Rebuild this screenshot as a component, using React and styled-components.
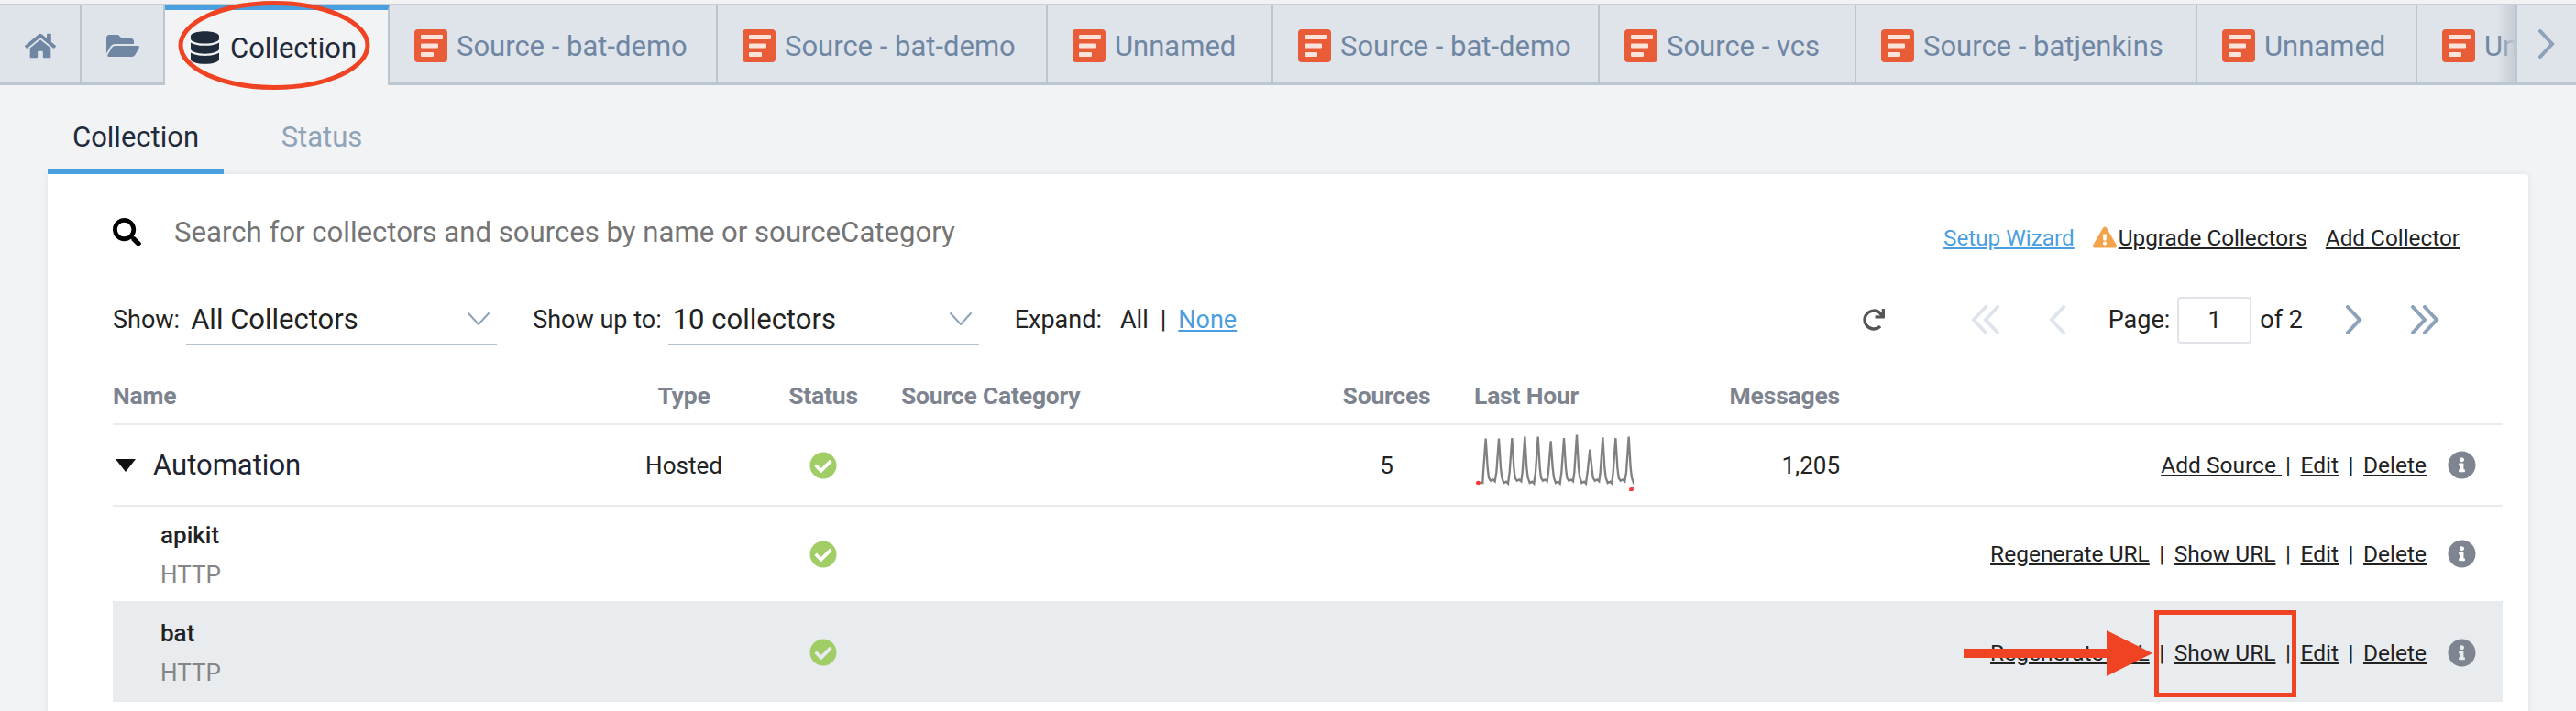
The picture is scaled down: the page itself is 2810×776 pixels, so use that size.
import React from 'react';
import styled, { createGlobalStyle } from 'styled-components';
import {
  FaHome,
  FaFolderOpen,
  FaDatabase,
  FaSearch,
  FaRedo,
  FaCheckCircle,
  FaInfoCircle,
  FaExclamationTriangle,
} from 'react-icons/fa';

const sourceTabs = [
  { label: 'Source - bat-demo', width: 358 },
  { label: 'Source - bat-demo', width: 360 },
  { label: 'Unnamed', width: 246 },
  { label: 'Source - bat-demo', width: 356 },
  { label: 'Source - vcs', width: 280 },
  { label: 'Source - batjenkins', width: 372 },
  { label: 'Unnamed', width: 240 },
  { label: 'Unnamed', width: 240 },
];

const peaks = [
  [362, 120], [405, 120], [448, 118], [490, 114], [533, 114], [575, 128],
  [618, 118], [660, 108], [703, 156], [745, 116], [787, 118], [830, 114],
];

// sparkline points, same shape repeated for every peak
const sparkPoints = () => {
  const pts = [[337, 265], [352, 265]];
  peaks.forEach(([x, y], i) => {
    const low = 258 + ((i * 7) % 14);
    pts.push([x - 8, 230], [x, y], [x + 6, 215], [x + 10, 248], [x + 16, low], [x + 24, low - 4], [x + 30, low + 2]);
  });
  pts.push([838, 287]);
  return pts.map((p) => p.join(',')).join(' ');
};

const GlobalStyle = createGlobalStyle`
  html, body {
    margin: 0;
    padding: 0;
    background: #f2f3f5;
    font-family: Roboto, "Liberation Sans", sans-serif;
  }
`;

const Page = styled.div`
  position: relative;
  width: 2810px;
  height: 776px;
  overflow: hidden;
  background: #f2f3f5;
  color: #222;
`;

const TopStrip = styled.div`
  height: 5px;
  background: #f2f2f2;
  border-bottom: 1px solid #c9cfd6;
  box-sizing: border-box;
`;

const TabBar = styled.div`
  display: flex;
  height: 88px;
  box-sizing: border-box;
`;

const TabScroller = styled.div`
  position: relative;
  display: flex;
  flex: 0 0 2744px;
  overflow: hidden;

  &::after {
    content: '';
    position: absolute;
    top: 0;
    right: 0;
    bottom: 3px;
    width: 20px;
    background: linear-gradient(to right, rgba(190, 198, 208, 0), #c5ccd5);
  }
`;

const Tab = styled.div`
  flex: none;
  box-sizing: border-box;
  width: ${(p) => p.$width}px;
  height: 88px;
  display: flex;
  align-items: center;
  gap: ${(p) => p.$gap || 10}px;
  padding: ${(p) => (p.$active ? 0 : 4)}px 0 0 ${(p) => p.$left ?? 27}px;
  font-size: 31px;
  color: ${(p) => (p.$active ? '#1f2a3a' : '#6f87a3')};
  background: ${(p) => (p.$active ? '#f2f3f5' : '#dfe3ea')};
  border-top: ${(p) => (p.$active ? '6px solid #4a9fe0' : '1px solid #c9cfd6')};
  border-right: 2px solid #bcc6d1;
  border-bottom: ${(p) => (p.$active ? '0' : '3px solid #bcc6d1')};
`;

const IconTab = styled(Tab)`
  justify-content: center;
  padding: 4px 0 0;
  color: #6f87a3;
`;

const ArrowTab = styled(Tab)`
  flex: 1;
  padding: 0;
  justify-content: center;
  border-left: 2px solid #bcc6d1;
  border-right: 0;
`;

const SubTabs = styled.div`
  display: flex;
  height: 97px;
  padding-left: 52px;
  font-size: 31px;
`;

const SubTab = styled.div`
  box-sizing: border-box;
  width: ${(p) => p.$width}px;
  display: flex;
  align-items: center;
  justify-content: center;
  padding-top: 21px;
  color: ${(p) => (p.$active ? '#1f2a3a' : '#8fa3b8')};
  border-bottom: 6px solid ${(p) => (p.$active ? '#4a9fe0' : 'transparent')};
`;

const Card = styled.div`
  box-sizing: border-box;
  width: 2706px;
  margin-left: 52px;
  height: 620px;
  padding: 38px 28px 0 71px;
  background: #fff;
  border-radius: 0 4px 0 0;
  box-shadow: 0 0 6px rgba(40, 50, 70, 0.1);
`;

const SearchRow = styled.div`
  display: flex;
  align-items: center;
  height: 50px;
  padding-right: 47px;
`;

const SearchIcon = styled(FaSearch)`
  width: 31px;
  height: 31px;
  color: #000;
  margin-right: 36px;
`;

const SearchInput = styled.input`
  flex: 1;
  border: 0;
  outline: 0;
  padding: 0;
  font: inherit;
  font-size: 31.15px;
  background: transparent;

  &::placeholder {
    color: #757575;
    opacity: 1;
  }
`;

const TopLinks = styled.div`
  display: flex;
  align-items: center;
  gap: 20px;
  font-size: 24.3px;
  padding-top: 12px;
`;

const Link = styled.a`
  color: ${(p) => (p.$blue ? '#4a9fe0' : '#222')};
  text-decoration: underline;
  white-space: pre;
`;

const Warned = styled.span`
  display: flex;
  align-items: center;
  gap: 2px;
`;

const WarnIcon = styled(FaExclamationTriangle)`
  width: 26px;
  height: 26px;
  color: #f5a34a;
`;

const FilterRow = styled.div`
  display: flex;
  align-items: center;
  height: 50px;
  margin-top: 46px;
  font-size: 27px;
`;

const FilterLabel = styled.span`
  margin-right: 7px;
`;

const Select = styled.div`
  flex: none;
  box-sizing: border-box;
  width: ${(p) => p.$width}px;
  height: 56px;
  margin-right: ${(p) => p.$after}px;
  padding: 0 8px 0 5px;
  display: flex;
  align-items: center;
  justify-content: space-between;
  font-size: 31px;
  border-bottom: 2px solid #b4c0cd;
`;

const ExpandLabel = styled.span`
  margin-right: 20px;
`;

const Pipe = styled.span`
  margin: 0 13px;
`;

const Pager = styled.div`
  margin-left: auto;
  display: flex;
  align-items: center;
  padding-right: 69px;
`;

const RefreshIcon = styled(FaRedo)`
  width: 24px;
  height: 24px;
  color: #555;
  margin-right: 94px;
`;

const PagerArrow = styled.svg`
  width: ${(p) => p.$width}px;
  height: ${(p) => p.$height || 32}px;
  margin: ${(p) => p.$margin || 0};
  fill: none;
  stroke: ${(p) => (p.$off ? '#dfe5ec' : '#8da2b8')};
  stroke-width: ${(p) => p.$stroke || 4};
  stroke-linecap: round;
`;

const PageInput = styled.input`
  box-sizing: border-box;
  width: 81px;
  height: 51px;
  margin: 0 9px 0 8px;
  border: 2px solid #e1e5ea;
  border-radius: 4px;
  outline: 0;
  font: inherit;
  font-size: 26px;
  text-align: center;
  color: #222;
`;

const Row = styled.div`
  display: grid;
  grid-template-columns: 553px 140px 164px 483px 99px 46px 212px 187px 1fr;
  align-items: center;
  box-sizing: border-box;
  width: 2607px;
  height: ${(p) => p.$height}px;
  font-size: 26px;
  background: ${(p) => (p.$selected ? '#e9ecef' : 'transparent')};
  border-bottom: ${(p) => (p.$selected ? '0' : '2px solid #e9ecef')};
`;

const HeaderRow = styled(Row)`
  margin-top: 26px;
  padding-top: 1px;
  font-size: 26.5px;
  font-weight: 700;
  letter-spacing: -0.2px;
  color: #7d838f;
`;

const Cell = styled.div`
  text-align: ${(p) => p.$align || 'left'};
  grid-column: ${(p) => p.$col || 'auto'};
  padding-left: ${(p) => p.$indent || 0}px;
  white-space: nowrap;
`;

const CollectorName = styled.div`
  display: flex;
  align-items: center;
  gap: 19px;
  padding-left: 3px;
  font-size: 31px;
  color: #1d2430;
`;

const Caret = styled.svg`
  width: 22px;
  height: 14px;
  fill: #111;
`;

const SourceName = styled.div`
  padding: 2px 0 0 52px;
  line-height: 43px;
  font-weight: 500;
  color: #222;
`;

const SourceType = styled.div`
  font-weight: 400;
  color: #858585;
`;

const StatusIcon = styled(FaCheckCircle)`
  display: block;
  margin: 0 auto;
  width: 30px;
  height: 30px;
  color: #a1cd66;
`;

const Actions = styled.div`
  display: flex;
  align-items: center;
  justify-content: flex-end;
  padding-right: 29px;
  font-size: 24.5px;
`;

const ActionPipe = styled.span`
  margin: 0 10.5px 0 ${(p) => (p.$tight ? 4 : 10.5)}px;
`;

const InfoIcon = styled(FaInfoCircle)`
  width: 31px;
  height: 31px;
  margin-left: 23px;
  color: #7e8590;
`;

const Spark = styled.svg`
  display: block;
  width: 172px;
  height: 64px;
  margin: 0 0 7px 2px;
`;

const Annotations = styled.svg`
  position: absolute;
  top: 0;
  left: 0;
  width: 2810px;
  height: 776px;
  pointer-events: none;
  fill: none;
  stroke: #f04323;
`;

const SourceIcon = () => (
  <svg width="36" height="36" viewBox="0 0 36 36" style={{ flex: 'none' }}>
    <rect width="36" height="36" rx="4" fill="#e85c37" />
    <rect x="7" y="6" width="24" height="5" rx="1" fill="#fde3da" />
    <rect x="7" y="15.5" width="19" height="5" rx="1" fill="#fde3da" />
    <rect x="7" y="25" width="14" height="5" rx="1" fill="#fde3da" />
  </svg>
);

const Single = ({ dir, off, margin }) => (
  <PagerArrow viewBox="0 0 18 32" $width={18} $off={off} $margin={margin}>
    <polyline points={dir === 'left' ? '16,2 3,16 16,30' : '2,2 15,16 2,30'} />
  </PagerArrow>
);

const Double = ({ dir, off, margin }) => (
  <PagerArrow viewBox="0 0 31 32" $width={31} $off={off} $margin={margin}>
    {dir === 'left' ? (
      <>
        <polyline points="16,2 3,16 16,30" />
        <polyline points="29,2 16,16 29,30" />
      </>
    ) : (
      <>
        <polyline points="2,2 15,16 2,30" />
        <polyline points="15,2 28,16 15,30" />
      </>
    )}
  </PagerArrow>
);

const SelectChevron = () => (
  <PagerArrow viewBox="0 0 24 14" $width={24} $height={14} $stroke={2}>
    <polyline points="1,1 12,13 23,1" />
  </PagerArrow>
);

const SourceRow = ({ name, selected }) => (
  <Row $height={selected ? 108 : 105} $selected={selected}>
    <SourceName>
      {name}
      <SourceType>HTTP</SourceType>
    </SourceName>
    <Cell />
    <Cell>
      <StatusIcon />
    </Cell>
    <Cell $col="9">
      <Actions>
        <Link>Regenerate URL</Link>
        <ActionPipe>|</ActionPipe>
        <Link>Show URL</Link>
        <ActionPipe>|</ActionPipe>
        <Link>Edit</Link>
        <ActionPipe>|</ActionPipe>
        <Link>Delete</Link>
        <InfoIcon />
      </Actions>
    </Cell>
  </Row>
);

export default function App() {
  return (
    <Page>
      <GlobalStyle />
      <TopStrip />
      <TabBar>
        <TabScroller>
          <IconTab $width={89}>
            <FaHome size={34} />
          </IconTab>
          <IconTab $width={91}>
            <FaFolderOpen size={36} />
          </IconTab>
          <Tab $active $width={245} $left={28} $gap={12}>
            <FaDatabase size={36} style={{ width: 31 }} />
            Collection
          </Tab>
          {sourceTabs.map((tab, i) => (
            <Tab key={i} $width={tab.width}>
              <SourceIcon />
              {tab.label}
            </Tab>
          ))}
        </TabScroller>
        <ArrowTab>
          <PagerArrow viewBox="0 0 18 32" $width={18} $height={36}>
            <polyline points="2,2 15,16 2,30" />
          </PagerArrow>
        </ArrowTab>
      </TabBar>

      <SubTabs>
        <SubTab $active $width={192}>Collection</SubTab>
        <SubTab $width={214}>Status</SubTab>
      </SubTabs>

      <Card>
        <SearchRow>
          <SearchIcon />
          <SearchInput placeholder="Search for collectors and sources by name or sourceCategory" />
          <TopLinks>
            <Link $blue>Setup Wizard</Link>
            <Warned>
              <WarnIcon />
              <Link>Upgrade Collectors</Link>
            </Warned>
            <Link>Add Collector</Link>
          </TopLinks>
        </SearchRow>

        <FilterRow>
          <FilterLabel>Show:</FilterLabel>
          <Select $width={339} $after={39}>
            All Collectors
            <SelectChevron />
          </Select>
          <FilterLabel>Show up to:</FilterLabel>
          <Select $width={339} $after={39}>
            10 collectors
            <SelectChevron />
          </Select>
          <ExpandLabel>Expand:</ExpandLabel>
          All
          <Pipe>|</Pipe>
          <Link $blue>None</Link>
          <Pager>
            <RefreshIcon />
            <Double dir="left" off margin="0 54px 0 0" />
            <Single dir="left" off margin="0 47px 0 0" />
            Page:
            <PageInput value="1" readOnly />
            of 2
            <Single dir="right" margin="0 53px 0 47px" />
            <Double dir="right" />
          </Pager>
        </FilterRow>

        <HeaderRow $height={64}>
          <Cell>Name</Cell>
          <Cell $align="center">Type</Cell>
          <Cell $align="center">Status</Cell>
          <Cell $indent={3}>Source Category</Cell>
          <Cell $align="center">Sources</Cell>
          <Cell $col="7">Last Hour</Cell>
          <Cell $align="right">Messages</Cell>
        </HeaderRow>

        <Row $height={89}>
          <CollectorName>
            <Caret viewBox="0 0 22 14">
              <polygon points="0,0 22,0 11,14" />
            </Caret>
            Automation
          </CollectorName>
          <Cell $align="center">Hosted</Cell>
          <Cell>
            <StatusIcon />
          </Cell>
          <Cell />
          <Cell $align="center">5</Cell>
          <Cell $col="7">
            <Spark viewBox="330 100 516 192">
              <polyline points={sparkPoints()} fill="none" stroke="#808080" strokeWidth="7" />
              <circle cx="337" cy="265" r="7" fill="#f33" />
              <circle cx="838" cy="287" r="7" fill="#f33" />
            </Spark>
          </Cell>
          <Cell $align="right">1,205</Cell>
          <Cell>
            <Actions>
              <Link>Add Source </Link>
              <ActionPipe $tight>|</ActionPipe>
              <Link>Edit</Link>
              <ActionPipe>|</ActionPipe>
              <Link>Delete</Link>
              <InfoIcon />
            </Actions>
          </Cell>
        </Row>

        <SourceRow name="apikit" />
        <SourceRow name="bat" selected />
      </Card>

      <Annotations viewBox="0 0 2810 776">
        <ellipse cx="299" cy="49.5" rx="102" ry="46" strokeWidth="5" />
        <rect x="2352.5" y="668.5" width="150" height="90" strokeWidth="5" />
        <path d="M2142 708h156v-20l50 25-50 25v-20h-156z" fill="#f04323" stroke="none" />
      </Annotations>
    </Page>
  );
}
